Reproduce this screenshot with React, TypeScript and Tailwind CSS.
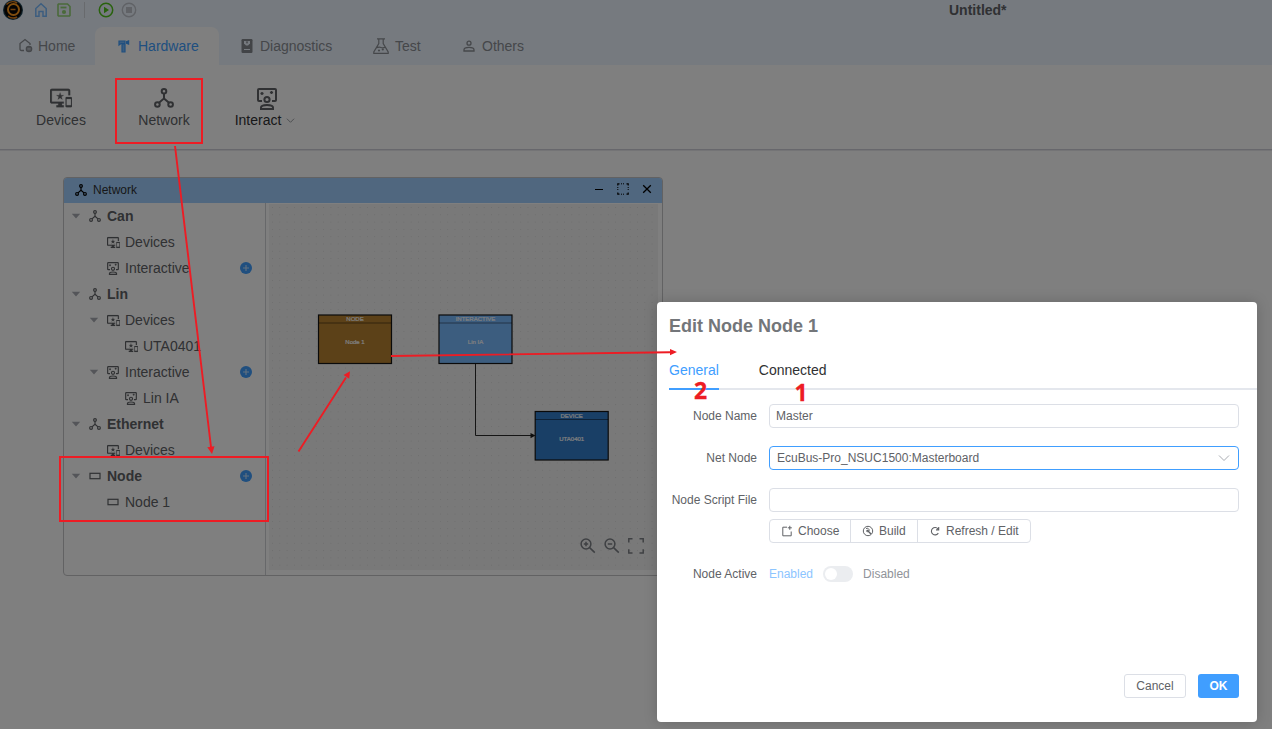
import React from "react";

type IconProps = { className?: string };

const NetworkIcon = ({ className }: IconProps) => (
  <svg viewBox="0 0 20 20" className={className} fill="none" stroke="currentColor" strokeWidth="2">
    <circle cx="10" cy="3.3" r="2.3" />
    <circle cx="3.4" cy="16.5" r="2.3" />
    <circle cx="16.6" cy="16.5" r="2.3" />
    <path d="M10 5.6V10.4L5 14.8M10 10.4L15 14.8" />
  </svg>
);

const DevicesIcon = ({ className }: IconProps) => (
  <svg viewBox="1 1 22 22" className={className} fill="currentColor">
    <path d="M23 11.01L18 11c-.55 0-1 .45-1 1v9c0 .55.45 1 1 1h5c.55 0 1-.45 1-1v-9c0-.55-.45-.99-1-.99zM23 20h-5v-7h5v7zM20 2H2C.89 2 0 2.89 0 4v12c0 1.1.89 2 2 2h7v2H7v2h8v-2h-2v-2h2v-2H2V4h18v5h2V4c0-1.11-.9-2-2-2zm-8.03 7L11 6l-.97 3H7l2.47 1.76-.94 2.91 2.47-1.8 2.47 1.8-.94-2.91L15 9h-3.03z" transform="translate(1 1) scale(.917)" stroke="currentColor" strokeWidth=".25" />
  </svg>
);

const InteractIcon = ({ className }: IconProps) => (
  <svg viewBox="0 0 20 22" className={className} fill="none" stroke="currentColor" strokeWidth="2">
    <path d="M5 13H2Q1 13 1 12V2Q1 1 2 1H18Q19 1 19 2V12Q19 13 18 13H15" />
    <circle cx="10" cy="11.5" r="2.6" />
    <path d="M4 21v-1.4c0-1.8 3-2.7 6-2.7s6 .9 6 2.7V21z" />
    <path d="M5 3.9v3.2M3.4 5.500h3.200M14.500 2.900v3.200M12.900 4.500h3.200" strokeWidth="1.500" />
  </svg>
);

const RectIcon = ({ className }: IconProps) => (
  <svg viewBox="0 0 12 12" className={className} fill="none" stroke="currentColor" strokeWidth="1.2">
    <rect x="1" y="3.3" width="10" height="5.4" />
  </svg>
);

const PlusIcon = () => (
  <svg viewBox="0 0 12 12" className="h-3 w-3">
    <circle cx="6" cy="6" r="6" fill="#409eff" />
    <path d="M6 3v6M3 6h6" stroke="#c6e2ff" strokeWidth="1.1" />
  </svg>
);

type TabProps = { label: string; active?: boolean; className: string; box: string; children: React.ReactNode };

const Tab = ({ label, active, className, box, children }: TabProps) => (
  <div
    className={`flex h-[38px] items-center text-sm ${
      active ? "rounded-t-lg bg-white text-[#409eff]" : "text-[#8b8e94]"
    } ${className}`}
  >
    <span className={`flex justify-center ${box}`}>{children}</span>
    {label}
  </div>
);

const tree = [
  { label: "Can", depth: 0, open: true, kind: "net", plus: false },
  { label: "Devices", depth: 1, open: false, kind: "dev", plus: false },
  { label: "Interactive", depth: 1, open: false, kind: "ia", plus: true },
  { label: "Lin", depth: 0, open: true, kind: "net", plus: false },
  { label: "Devices", depth: 1, open: true, kind: "dev", plus: false },
  { label: "UTA0401", depth: 2, open: false, kind: "dev", plus: false },
  { label: "Interactive", depth: 1, open: true, kind: "ia", plus: true },
  { label: "Lin IA", depth: 2, open: false, kind: "ia", plus: false },
  { label: "Ethernet", depth: 0, open: true, kind: "net", plus: false },
  { label: "Devices", depth: 1, open: false, kind: "dev", plus: false },
  { label: "Node", depth: 0, open: true, kind: "node", plus: true },
  { label: "Node 1", depth: 1, open: false, kind: "node", plus: false },
];

const indent = ["pl-[7px]", "pl-[25px]", "pl-[43px]"];

const TreeIcon = ({ kind }: { kind: string }) => {
  if (kind === "net") return <NetworkIcon className="h-3 w-3" />;
  if (kind === "dev") return <DevicesIcon className="h-[13px] w-[13px]" />;
  if (kind === "ia") return <InteractIcon className="h-[13px] w-3" />;
  return <RectIcon className="h-3 w-3" />;
};

type BlockProps = { x: number; y: number; title: string; name: string; fill: string };

const Block = ({ x, y, title, name, fill }: BlockProps) => (
  <g>
    <rect x={x} y={y} width="73" height="48.5" fill={fill} stroke="#151515" strokeWidth="1.2" />
    <path d={`M${x} ${y + 8}h73`} stroke="#000" strokeOpacity=".45" strokeWidth="1.2" />
    <g fill="#fff" stroke="#fff" strokeWidth=".2" fontSize="6" textAnchor="middle" fontFamily="Liberation Sans, sans-serif">
      <text x={x + 36.5} y={y + 6.2}>{title}</text>
      <text x={x + 36.5} y={y + 29.3}>{name}</text>
    </g>
  </g>
);

const NetworkWindow = () => (
  <section className="absolute left-[63px] top-[177px] flex h-[399px] w-[600px] flex-col overflow-hidden rounded border border-[#c4c4c6] bg-white">
    <header className="flex h-[25px] shrink-0 items-center bg-[#a0cfff] pb-px pl-[11px] text-xs text-[#303133]">
      <NetworkIcon className="h-3 w-3 text-black" />
      <span className="ml-1.5">Network</span>
      <div className="ml-auto mr-[9px] flex items-center gap-3 pb-[3px] text-black">
        <svg viewBox="0 0 12 12" className="h-3 w-3"><path d="M2 6.5h8" stroke="currentColor" strokeWidth="1.2" /></svg>
        <svg viewBox="0 0 12 12" className="h-3 w-3" fill="none" stroke="currentColor">
          <path d="M.8 2.500V.8H2.500M9.500 .8h1.700V2.500M11.200 9.500v1.700H9.500M2.500 11.200H.8V9.500" strokeWidth="1.200" />
          <path d="M4 .8h4M4 11.200h4M.8 4v4M11.200 4v4" strokeDasharray="1 1" />
        </svg>
        <svg viewBox="0 0 12 12" className="h-3 w-3"><path d="M2.2 2.2l7.6 7.6M9.8 2.2L2.2 9.8" stroke="currentColor" strokeWidth="1.3" /></svg>
      </div>
    </header>
    <div className="flex min-h-0 grow">
      <div className="w-[202px] shrink-0 border-r border-[#cfd0d4] text-sm text-[#606266]">
        {tree.map((row, i) => (
          <div key={i} className={`flex h-[26px] items-center ${indent[row.depth]}`}>
            <span className="flex w-[18px]">
              {row.open && (
                <svg viewBox="0 0 10 10" className="h-[10px] w-[10px]"><path d="M.8 2.800h8.400L5 7.500z" fill="#a8abb2" /></svg>
              )}
            </span>
            <span className="flex w-[18px] text-[#606266]"><TreeIcon kind={row.kind} /></span>
            <span className={row.depth === 0 ? "font-bold" : ""}>{row.label}</span>
            {row.plus && <span className="ml-auto mr-[13px]"><PlusIcon /></span>}
          </div>
        ))}
      </div>
      <div className="pl-[3px] pt-px">
        <svg width="389" height="366" viewBox="269 204 389 366">
          <defs>
            <pattern id="dots" width="7.3" height="7.3" x="272" y="207" patternUnits="userSpaceOnUse">
              <rect width="1" height="1" fill="#dcdcdc" />
            </pattern>
          </defs>
          <rect x="269" y="204" width="389" height="366" fill="#f3f3f3" />
          <rect x="269" y="204" width="389" height="366" fill="url(#dots)" />
          <path d="M475.500 364v71.500H531" fill="none" stroke="#2a2a2a" />
          <path d="M530.500 433l5 2.600-5 2.600z" fill="#1a1a1a" />
          <Block x={318.5} y={315} title="NODE" name="Node 1" fill="#b88230" />
          <Block x={439} y={315} title="INTERACTIVE" name="Lin IA" fill="#79bbff" />
          <Block x={535.2} y={411.5} title="DEVICE" name="UTA0401" fill="#337ecc" />
          <g fill="none" stroke="#7d8086" strokeWidth="1.5">
            <circle cx="586" cy="544" r="4.900" />
            <path d="M589.600 547.600l5.200 5M583.800 544h4.400M586 541.800v4.400" />
            <circle cx="610" cy="544" r="4.900" />
            <path d="M613.600 547.600l5.200 5M607.800 544h4.400" />
            <path d="M628.800 542.500v-3.700h3.700M639.500 538.800h3.700v3.700M643.200 549.200v3.700h-3.700M632.500 552.900h-3.700v-3.700" />
          </g>
        </svg>
      </div>
    </div>
  </section>
);

const Field = ({ label, children }: { label: string; children?: React.ReactNode }) => (
  <div className="flex items-center">
    <label className="w-[100px] text-right">{label}</label>
    <div className="ml-3 h-6 w-[470px]">{children}</div>
  </div>
);

const EditDialog = () => (
  <section className="absolute left-[657px] top-[302px] flex h-[420px] w-[600px] flex-col rounded bg-white text-xs text-[#606266] shadow-[0_0_14px_rgba(0,0,0,0.18)]">
    <h2 className="pl-3 pt-[11px] text-lg/[26px] font-bold text-[#73767a]">Edit Node Node 1</h2>
    <div className="ml-3 mt-[11px] flex h-10 gap-10 border-b-2 border-[#e4e7ed] text-sm/[40px] text-[#303133]">
      <span className="h-10 border-b-2 border-[#409eff] text-[#409eff]">General</span>
      <span>Connected</span>
    </div>
    <div className="mt-3.5 flex flex-col gap-[18px]">
      <Field label="Node Name">
        <div className="flex h-6 items-center rounded border border-[#dcdfe6] pl-1.5">Master</div>
      </Field>
      <Field label="Net Node">
        <div className="flex h-6 items-center justify-between rounded border border-[#409eff] pl-[7px] pr-2">
          EcuBus-Pro_NSUC1500:Masterboard
          <svg viewBox="0 0 12 12" className="h-3 w-3" fill="none" stroke="#a8abb2"><path d="M1 3.500L6 8.500l5-5" /></svg>
        </div>
      </Field>
      <Field label="Node Script File">
        <div className="h-6 rounded border border-[#dcdfe6]" />
      </Field>
    </div>
    <div className="ml-28 mt-[7px] flex h-6 w-[262px] items-stretch rounded border border-[#dcdfe6]">
      <div className="flex w-[81px] items-center border-r border-[#dcdfe6] pl-[11px]">
        <svg viewBox="0 0 12 12" className="mr-[5px] h-3 w-3" fill="none" stroke="currentColor">
          <path d="M6 2.200H1.800v8.600h8.400V6.500M8.800.8v4M6.800 2.800h4" />
        </svg>
        Choose
      </div>
      <div className="flex w-[67px] items-center border-r border-[#dcdfe6] pl-[11px]">
        <svg viewBox="0 0 12 12" className="mr-[5px] h-3 w-3" fill="none" stroke="currentColor">
          <circle cx="6" cy="6" r="4.700" />
          <path d="M5 5l4 4" strokeWidth="1.400" />
          <path d="M4 3.600a2 2 0 0 1 3 2.400 2 2 0 0 1-3-.3" />
        </svg>
        Build
      </div>
      <div className="flex items-center pl-[11px]">
        <svg viewBox="0 0 12 12" className="mr-[5px] h-3 w-3" fill="none" stroke="currentColor">
          <path d="M9.300 8.100A3.700 3.700 0 1 1 9 3.900L9.700 4.700M9.700 2v2.900H7" strokeWidth="1.100" />
        </svg>
        Refresh / Edit
      </div>
    </div>
    <div className="mt-[19px] flex h-6 items-center">
      <label className="w-[100px] text-right">Node Active</label>
      <span className="ml-3 text-[#8cc5ff]">Enabled</span>
      <span className="ml-2.5 flex h-4 w-[30px] items-center rounded-full bg-[#ebedf0] pl-0.5">
        <span className="h-3 w-3 rounded-full bg-white" />
      </span>
      <span className="ml-2.5 text-[#909399]">Disabled</span>
    </div>
    <div className="mb-6 mr-[18px] mt-auto flex justify-end gap-3">
      <button className="h-6 w-[62px] rounded-[3px] border border-[#dcdfe6]">Cancel</button>
      <button className="h-6 w-[41px] rounded-[3px] bg-[#409eff] font-bold text-white">OK</button>
    </div>
  </section>
);

const Annotations = () => (
  <svg className="absolute left-0 top-0" width="1272" height="729" fill="none" stroke="#ed1c24" strokeWidth="2">
    <rect x="116" y="79" width="86" height="64" />
    <rect x="60" y="457" width="208" height="64" />
    <path d="M175 146L211 447M298.500 451.500L346 377.500M391 356L670 352.200" strokeWidth="1.900" />
    <g fill="#ed1c24" stroke="none">
      <path d="M212 454l-4.700-6.800 7.200-.9zM350 371.200l-.8 7.600-5.700-3.700zM677 352l-7 3.200v-6.200z" />
      <g fontFamily="Noto Sans, sans-serif" fontWeight="700" fontSize="23" textAnchor="middle" stroke="#ed1c24" strokeWidth=".3">
        <text x="700.500" y="398.500">2</text>
        <text x="801" y="401">1</text>
      </g>
    </g>
  </svg>
);

export default function App() {
  return (
    <div className="relative h-[729px] w-[1272px] overflow-hidden bg-white font-['Liberation_Sans',Arial,sans-serif]">
      <header className="h-[65px] bg-[#ecf5ff]">
        <div className="flex h-[27px] items-start">
          <svg viewBox="0 0 20 20" className="ml-[3px] h-5 w-5" fill="none">
            <circle cx="10" cy="10" r="10" fill="#1c4052" />
            <circle cx="10" cy="10" r="8.800" fill="#080808" />
            <circle cx="10.500" cy="9.500" r="5.500" stroke="#ff9a1e" strokeWidth="2" />
            <path d="M3.500 4.500A8.500 8.500 0 0 1 14 3M5 16a8 8 0 0 0 9 1M7.500 9.500h5" stroke="#e0801c" strokeWidth="1.500" />
          </svg>
          <svg viewBox="0 0 14 16" className="ml-[11px] mt-[2px] h-4 w-[14px]" fill="none" stroke="#79bbff" strokeWidth="1.500">
            <path d="M1.800 14.200V6.500L7 1.800l5.200 4.700v7.700H9V9.500H5v4.700z" />
          </svg>
          <svg viewBox="0 0 14 14" className="ml-[9px] mt-[3px] h-[14px] w-[14px]" fill="none" stroke="#95d475" strokeWidth="1.600">
            <path d="M1.500 1h9L13 3.500V12.500L12.500 13H1.500L1 12.500V1.500z" />
            <path d="M3.500 4.500h6" strokeWidth="1.800" />
            <circle cx="7" cy="9" r="2.100" fill="#95d475" stroke="none" />
          </svg>
          <span className="ml-[13px] mt-[2px] h-4 w-px bg-[#d0d4da]" />
          <svg viewBox="0 0 16 16" className="ml-[13px] mt-[2px] h-4 w-4">
            <circle cx="8" cy="8" r="6.700" fill="none" stroke="#52c41a" strokeWidth="1.500" />
            <path d="M6 4.800v6.400L11 8z" fill="#52c41a" />
          </svg>
          <svg viewBox="0 0 16 16" className="ml-[7px] mt-[2px] h-4 w-4">
            <circle cx="8" cy="8" r="6.700" fill="none" stroke="#c0c4cc" strokeWidth="1.400" />
            <rect x="5" y="5" width="6" height="6" fill="#c0c4cc" />
          </svg>
          <h1 className="ml-[812px] mt-px text-sm/[18px] font-bold text-[#606266]">Untitled*</h1>
        </div>
        <nav className="flex">
          <Tab label="Home" className="w-[95px] pl-[18px]" box="mr-1 w-4">
            <svg viewBox="0 0 16 16" className="h-4 w-4" fill="none" stroke="currentColor" strokeWidth="1.300">
              <path d="M6 12.500H3.500Q2 12.500 2 11V5.500L7 1.500 12 5.500v1.500" />
              <circle cx="11" cy="11" r="3.300" fill="currentColor" stroke="none" />
              <path d="M9.300 10.300h3.400M9.300 11.800h3.400" stroke="#ecf5ff" strokeWidth=".6" />
            </svg>
          </Tab>
          <Tab label="Hardware" active className="w-[124px] pl-5" box="mr-[5px] w-[18px]">
            <svg viewBox="0 0 12 14" className="h-[14px] w-3">
              <path d="M1 2h6v2.500H3L1 6zM4 5h3v8H4z" fill="#79bbff" stroke="#409eff" strokeWidth="1.200" />
              <path d="M11.200 1v5L8 4.700V2.200z" fill="#409eff" />
            </svg>
          </Tab>
          <Tab label="Diagnostics" className="w-[133px] pl-5" box="mr-[5px] w-4">
            <svg viewBox="0 0 12 14" className="h-[14px] w-3">
              <rect x=".5" y="0" width="11" height="14" rx="1.200" fill="#85888e" />
              <path d="M3 2h6v2.500L7 6.500H5L3 4.500z" fill="#ecf5ff" />
              <path d="M4.800 2.500L6 5l1.200-2.500z" fill="#85888e" />
              <path d="M3 10.500h6" stroke="#ecf5ff" />
            </svg>
          </Tab>
          <Tab label="Test" className="w-[88px] pl-5" box="mr-[5px] w-[18px]">
            <svg viewBox="0 0 16 16" className="h-4 w-4" fill="none" stroke="currentColor" strokeWidth="1.200">
              <path d="M4 .8h8M5.800 1v4.500L.8 14v1.300h14.400V14l-5-8.500V1M3.500 9.800Q6 8.500 8 9.500t4.500-.5" />
              <g fill="currentColor" stroke="none"><circle cx="6" cy="12.500" r="1.100" /><circle cx="9.800" cy="11.500" r="1.100" /></g>
            </svg>
          </Tab>
          <Tab label="Others" className="w-[104px] pl-5" box="mr-[5px] w-[17px]">
            <svg viewBox="0 0 12 12" className="h-3 w-3" fill="none" stroke="currentColor" strokeWidth="1.300">
              <circle cx="6" cy="3.200" r="2" />
              <path d="M1 11V9.700C1 8.200 3.500 7.400 6 7.400s5 .8 5 2.300V11z" />
            </svg>
          </Tab>
        </nav>
      </header>
      <div className="flex h-[85px] border-b border-[#cfcfd8] text-sm/[20px] text-[#606266] shadow-[0_1px_0_#e8e8ec]">
        <div className="ml-[31px] mt-[23px] flex w-[60px] flex-col items-center">
          <DevicesIcon className="h-[22px] w-[22px] -mt-px -mb-px" />
          <span className="mt-[2px]">Devices</span>
        </div>
        <div className="ml-[43px] mt-[23px] flex w-[60px] flex-col items-center">
          <NetworkIcon className="h-5 w-5" />
          <span className="mt-[2px]">Network</span>
        </div>
        <div className="ml-[33px] mt-[23px] flex w-20 flex-col items-center">
          <InteractIcon className="h-[22px] w-5" />
          <span className="-ml-1 flex items-center text-[#303133]">
            Interact
            <svg viewBox="0 0 10 10" className="ml-[5px] h-[9px] w-[9px]" fill="none" stroke="#909399"><path d="M1 3L5 7l4-4" /></svg>
          </span>
        </div>
      </div>
      <NetworkWindow />
      <div className="absolute inset-0 bg-black/50" />
      <EditDialog />
      <Annotations />
    </div>
  );
}
